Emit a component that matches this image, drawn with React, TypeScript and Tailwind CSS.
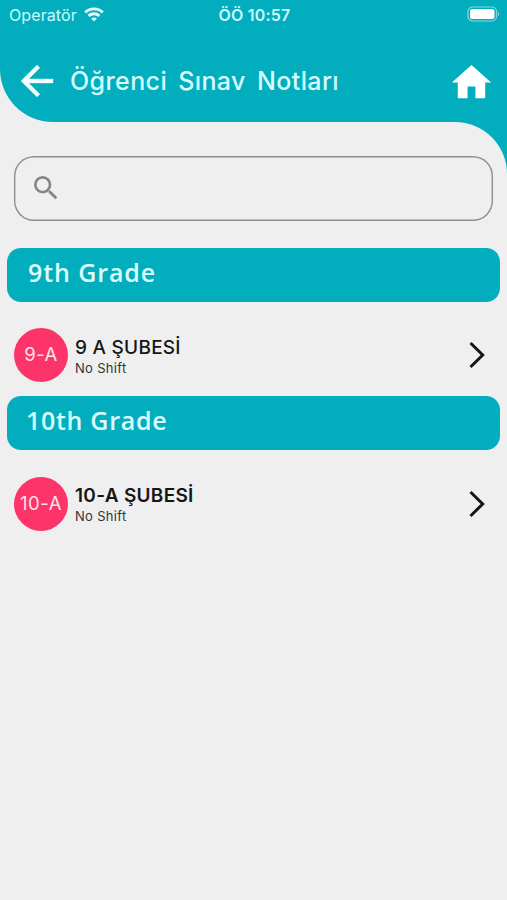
type Section = { title: string; badge: string; name: string; shift: string; titleClass: string; badgeClass: string; nameClass: string };

const sections: Section[] = [
  {
    title: "9th Grade",
    badge: "9-A",
    name: "9 A ŞUBESİ",
    shift: "No Shift",
    titleClass: "pl-[21px] tracking-[0.9px]",
    badgeClass: "tracking-[0.5px]",
    nameClass: "font-medium tracking-[0.25px]",
  },
  {
    title: "10th Grade",
    badge: "10-A",
    name: "10-A ŞUBESİ",
    shift: "No Shift",
    titleClass: "pl-[19px] tracking-[0.7px]",
    badgeClass: "tracking-[0.5px]",
    nameClass: "font-semibold tracking-[0.3px]",
  },
];

function StatusBar() {
  return (
    <div className="grid h-[30px] grid-cols-3 items-center pl-[9px] pr-[7px] text-[#c9fbff]">
      <div className="flex items-center gap-[7px]">
        <span className="text-[16px] leading-5 tracking-[0.1px]">Operatör</span>
        <svg className="-mt-0.5" width="20" height="15" viewBox="0 0 20 15" fill="none" stroke="#e4fdff" strokeWidth="2.9">
          <path d="M1.2 5.4C6.1.7 13.9.7 18.8 5.4" />
          <path d="M4.6 8.9C7.6 6.1 12.4 6.1 15.4 8.9" />
          <path d="M10 14.6 7.1 11.6c1.6-1.4 4.2-1.4 5.8 0z" fill="#e4fdff" stroke="none" />
        </svg>
      </div>
      <span className="whitespace-nowrap text-center text-[16px] font-semibold leading-5 tracking-[0.2px]">ÖÖ 10:57</span>
      <svg className="-mt-0.5 justify-self-end" width="33" height="16" viewBox="0 0 33 16" fill="none">
        <rect x="1" y="1" width="28.5" height="14" rx="4.5" stroke="#7fdce3" strokeWidth="1.2" />
        <rect x="3" y="3" width="24.5" height="10" rx="2.6" fill="#fff" />
        <path d="M31 5.7c1.6.8 1.6 3.8 0 4.6z" fill="#7fdce3" />
      </svg>
    </div>
  );
}

function Header() {
  return (
    <header className="bg-[#efeff0]">
      <div className="h-[122px] rounded-bl-[53px] bg-[#02aebe]">
        <StatusBar />
        <div className="flex h-[101px] items-center pl-[13px] pr-3">
          <svg width="48" height="48" viewBox="0 0 24 24" fill="#f0feff" stroke="#f0feff" strokeWidth=".2" strokeLinejoin="round">
            <path d="M20 11H7.83l5.59-5.59L12 4l-8 8 8 8 1.41-1.41L7.83 13H20v-2z" />
          </svg>
          <h1 className="ml-[9px] flex-1 whitespace-nowrap text-[25px] font-medium leading-8 tracking-[0.4px] text-[#d5fcff] [word-spacing:4px]">
            Öğrenci Sınav Notları
          </h1>
          <svg className="mt-[3px]" width="47" height="47" viewBox="0 0 24 24" fill="#fff">
            <path d="M10 20v-6h4v6h5v-8h3L12 3 2 12h3v8z" />
          </svg>
        </div>
      </div>
    </header>
  );
}

function SectionBlock({ s }: { s: Section }) {
  return (
    <section className="h-[148.5px]">
      <div className={`mx-[7px] flex h-[54px] items-center rounded-[14px] bg-[#02aebe] pb-1 font-['Open_Sans',sans-serif] text-[25px] font-semibold text-[#dcfdff] ${s.titleClass}`}>
        {s.title}
      </div>
      <div className="mt-[26px] flex h-[55px] items-center pl-[14px] pr-[21px]">
        <div className={`flex size-[54px] items-center justify-center rounded-full bg-[#fd3469] text-[18.5px] text-[#ffe3ea] ${s.badgeClass}`}>
          {s.badge}
        </div>
        <div className="ml-[7px] flex flex-1 flex-col pt-1">
          <span className={`text-[19px] leading-[22px] text-[#161617] ${s.nameClass}`}>{s.name}</span>
          <span className="text-[13px] leading-[19px] tracking-[0.3px] text-[#343435]">{s.shift}</span>
        </div>
        <svg width="17" height="28" viewBox="0 0 17 28" fill="none" stroke="#151515" strokeWidth="3">
          <path d="M1.5 2 13.7 14 1.5 26" />
        </svg>
      </div>
    </section>
  );
}

export default function App() {
  return (
    <div className="flex h-[900px] w-[507px] flex-col overflow-hidden bg-[#efeff0] font-['Inter',sans-serif]">
      <Header />
      <div className="flex-1 bg-[linear-gradient(#02aebe_60px,#efeff0_60px)]">
        <main className="h-full rounded-tr-[52px] bg-[#efeff0] pt-[33.5px]">
          <div className="mx-[14px] flex h-[65px] items-center rounded-[20px] shadow-[inset_0_0_0_1.4px_#8f8f90] pl-4">
            <svg width="32" height="32" viewBox="0 0 24 24" fill="#858586">
              <path d="M15.5 14h-.79l-.28-.27A6.471 6.471 0 0 0 16 9.5 6.5 6.5 0 1 0 9.5 16c1.61 0 3.09-.59 4.23-1.57l.27.28v.79l5 4.99L20.49 19l-4.99-5zm-6 0C7.01 14 5 11.99 5 9.5S7.01 5 9.5 5 14 7.01 14 9.5 11.99 14 9.5 14z" />
            </svg>
          </div>
          <div className="mt-[27px]">
            {sections.map((s) => (
              <SectionBlock key={s.title} s={s} />
            ))}
          </div>
        </main>
      </div>
    </div>
  );
}
